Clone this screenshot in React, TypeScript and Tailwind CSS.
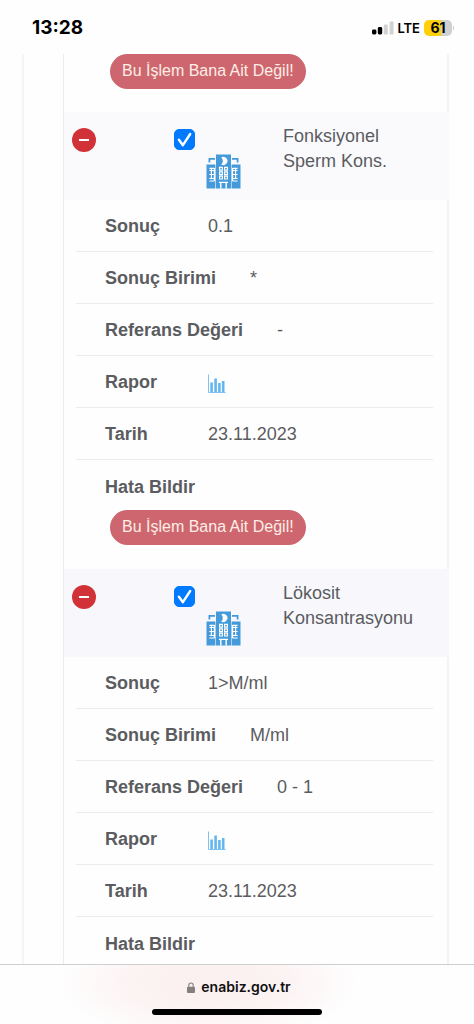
import React from 'react';

interface LabResult {
  id: string;
  name: string;
  result: string;
  unit: string;
  reference: string;
  date: string;
  headClass: string;
  canReport: boolean;
}

const results: LabResult[] = [
  {
    id: 'fonksiyonel',
    name: 'Fonksiyonel Sperm Kons.',
    result: '0.1',
    unit: '*',
    reference: '-',
    date: '23.11.2023',
    headClass: 'bg-[#fafafd]',
    canReport: true,
  },
  {
    id: 'lokosit',
    name: 'Lökosit Konsantrasyonu',
    result: '1>M/ml',
    unit: 'M/ml',
    reference: '0 - 1',
    date: '23.11.2023',
    headClass: 'bg-[#f7f7fc]',
    canReport: false,
  },
];

const HospitalIcon: React.FC = () => (
  <svg viewBox="0 0 35 35" className="h-[35px] w-[35px] shrink-0" aria-hidden="true">
    <g fill="#459bd9">
      <rect x="0.5" y="10.5" width="8.9" height="24" />
      <rect x="10" y="0.5" width="15" height="34" />
      <rect x="25.6" y="10.5" width="8.9" height="24" />
    </g>
    <path d="M3.4 8.6V4.8H9M31.6 8.6V4.8H26" fill="none" stroke="#459bd9" strokeWidth="1.8" />
    <path d="M15.2 3.4A4.1 4.1 0 1 1 15.2 10.4A4.6 4.6 0 0 0 15.2 3.4Z" fill="#fff" />
    <g fill="none" stroke="#fff" strokeWidth="1.2">
      {[13.4, 17.8, 22.2].map((y) => (
        <path key={y} d={`M13.6 ${y}h2.8v2.8h-2.8zM18.6 ${y}h2.8v2.8h-2.8z`} />
      ))}
      {[16.5, 20.5, 24.5, 27].map((y) => (
        <path key={y} d={`M3.4 ${y}h5.2M26.4 ${y}h5.2`} />
      ))}
      <path d="M5.4 14v10.5M8.4 14v13M26.6 14v13M29.6 14v10.5M3.4 14.4h5M26.6 14.4h5" />
      <path d="M13 28.4h9M14.8 28v6.5M20.2 28v6.5" strokeWidth="1.4" />
    </g>
  </svg>
);

const ChartIcon: React.FC = () => (
  <svg viewBox="0 0 18 20" className="h-5 w-[18px]" aria-hidden="true">
    <path d="M0.5 0.5V18.5H17.5" fill="none" stroke="#7fc1f0" strokeWidth="1" />
    <path d="M3.6 18V8.5M7.6 18V4.5M11.4 18V9M15.2 18V7" stroke="#64b6ef" strokeWidth="2.6" />
  </svg>
);

const ReportButton: React.FC = () => (
  <button
    type="button"
    className="ml-[5px] block rounded-full bg-[#cd666e] px-3 pt-[5px] pb-1.5 text-base text-[#fdeee6]"
  >
    Bu İşlem Bana Ait Değil!
  </button>
);

interface RowProps {
  label: string;
  children: React.ReactNode;
}

const Row: React.FC<RowProps> = ({ label, children }) => (
  <div className="ml-3 mr-[14px] flex border-b border-[#ebebed] pt-3.5 pb-[13px] pl-[29px]">
    <dt className="mr-[34px] min-w-[69px] font-bold">{label}</dt>
    <dd>{children}</dd>
  </div>
);

const ResultCard: React.FC<{ item: LabResult }> = ({ item }) => (
  <section>
    <div className={`-mr-0.5 flex h-[88px] items-start pt-3 pl-2 ${item.headClass}`}>
      <button
        type="button"
        aria-label="Kapat"
        className="mt-1 flex h-6 w-6 shrink-0 items-center justify-center rounded-full bg-[#d13237]"
      >
        <span className="h-0.5 w-2.5 bg-white" />
      </button>
      <label className="mt-[5px] ml-[78px] grid shrink-0" aria-label={item.name}>
        <input
          type="checkbox"
          defaultChecked
          className="peer col-start-1 row-start-1 h-[21px] w-[21px] appearance-none rounded-[5px] border border-[#b5b5b5] bg-white checked:border-[#017aff] checked:bg-[#017aff]"
        />
        <svg
          viewBox="0 0 21 21"
          className="pointer-events-none invisible col-start-1 row-start-1 h-[21px] w-[21px] peer-checked:visible"
          aria-hidden="true"
        >
          <path
            d="M4.9 10.8L8.9 16.2L16.2 5"
            fill="none"
            stroke="#fff"
            strokeWidth="2.4"
            strokeLinecap="round"
            strokeLinejoin="round"
          />
        </svg>
      </label>
      <div className="mt-[30px] ml-[11px] shrink-0">
        <HospitalIcon />
      </div>
      <h2 className="ml-[42px] max-w-[140px] leading-[25px]">{item.name}</h2>
    </div>
    <dl>
      <Row label="Sonuç">{item.result}</Row>
      <Row label="Sonuç Birimi">{item.unit}</Row>
      <Row label="Referans Değeri">{item.reference}</Row>
      <Row label="Rapor">
        <a href="#rapor" aria-label="Rapor" className="block pt-1">
          <ChartIcon />
        </a>
      </Row>
      <Row label="Tarih">{item.date}</Row>
      <div className="pt-[15px] pb-6 pl-[41px]">
        <dt className="font-bold">Hata Bildir</dt>
        {item.canReport && (
          <dd className="mt-[11px]">
            <ReportButton />
          </dd>
        )}
      </div>
    </dl>
  </section>
);

const StatusBar: React.FC = () => (
  <header className="flex h-[54px] shrink-0 items-center justify-between pt-0.5 pr-5 pl-8 font-['Inter',sans-serif] text-black">
    <span className="text-[19px] font-bold">13:28</span>
    <div className="flex items-center">
      <svg viewBox="0 0 22 14" className="h-3.5 w-[22px]" aria-hidden="true">
        <rect x="0" y="8.5" width="4.4" height="5" rx="1.4" fill="#000" />
        <rect x="5.8" y="6" width="4.4" height="7.5" rx="1.4" fill="#000" />
        <rect x="11.8" y="3.5" width="4" height="10" rx="1.2" fill="#d2d2d2" />
        <rect x="17.6" y="0.5" width="4" height="13" rx="1.2" fill="#d2d2d2" />
      </svg>
      <span className="ml-[3px] text-[13px] font-semibold">LTE</span>
      <div className="ml-1 flex items-center">
        <span className="flex h-4 w-7 items-center justify-center rounded-[5px] bg-linear-to-r from-[#fed009] from-61% to-[#d0d0d0] to-61% text-sm font-bold">
          61
        </span>
        <span className="ml-px h-1 w-px rounded-r bg-[#c8c8c8]" />
      </div>
    </div>
  </header>
);

const App: React.FC = () => {
  return (
    <div className="flex h-screen flex-col bg-[#fefefe] font-['Liberation_Sans',sans-serif] text-lg leading-6 text-[#5b5c60]">
      <StatusBar />
      <main className="ml-[22px] flex-1 overflow-hidden border-l-2 border-[#f5f5f6] pr-[25px] pl-[39px]">
        <div className="min-h-full border-r-2 border-l border-r-[#f3f3f4] border-l-[#ececee]">
          <div className="pb-[23px] pl-[41px]">
            <ReportButton />
          </div>
          {results.map((item) => (
            <ResultCard key={item.id} item={item} />
          ))}
        </div>
      </main>
      <footer className="flex h-[60px] shrink-0 flex-col items-center border-t border-[#cfcfcf] bg-[radial-gradient(ellipse_150px_60px_at_44%_30%,#fbefef_0%,#fcf3f3_50%,#fefefe_100%)] pt-3 font-['Inter',sans-serif]">
        <a href="#adres" className="ml-1 flex items-center gap-1.5 text-sm leading-5 font-semibold text-[#111]">
          <svg viewBox="0 0 8 11" className="h-[11px] w-2" aria-hidden="true">
            <rect x="0" y="4.8" width="8" height="6.2" rx="1" fill="#858080" />
            <path d="M1.8 5V3.2a2.2 2.2 0 0 1 4.4 0V5" fill="none" stroke="#858080" strokeWidth="1.1" />
          </svg>
          enabiz.gov.tr
        </a>
        <div className="mt-3 h-1.5 w-[170px] rounded-full bg-black" />
      </footer>
    </div>
  );
};

export default App;
